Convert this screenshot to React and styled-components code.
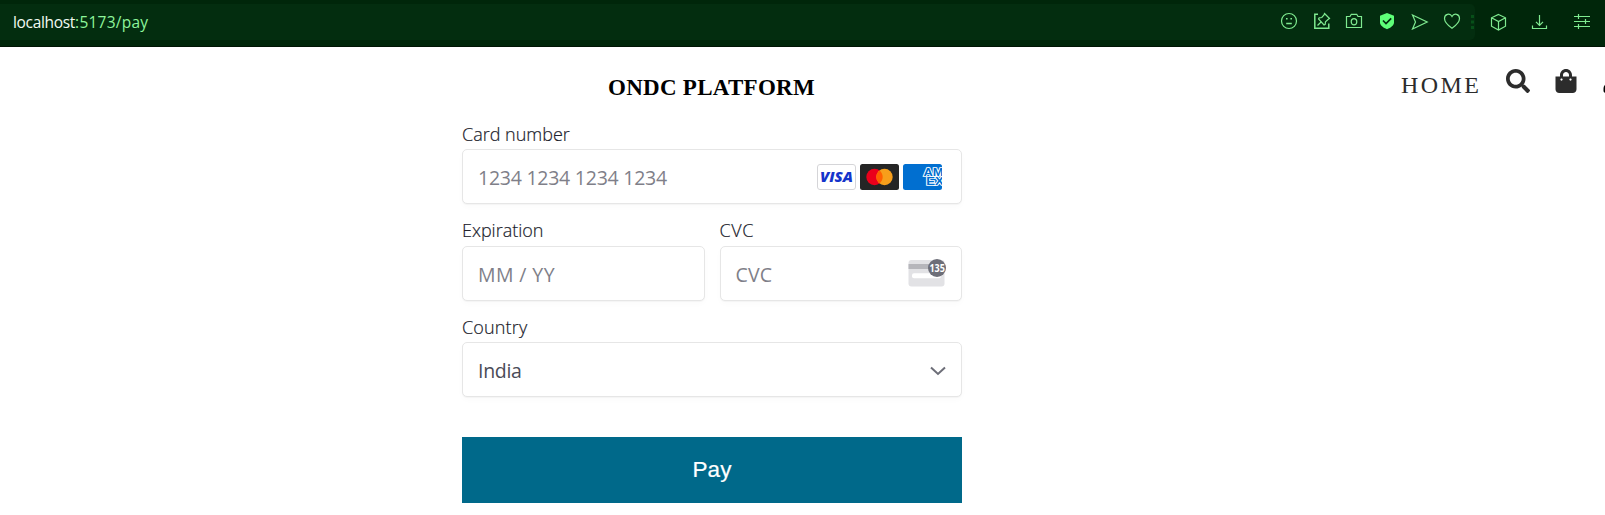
import React from "react";
import styled, { createGlobalStyle } from "styled-components";
import { FaSearch, FaShoppingBag, FaUser } from "react-icons/fa";

const GlobalStyle = createGlobalStyle`
  * { box-sizing: border-box; }
  html, body { margin: 0; padding: 0; background: #fff; overflow: hidden; }
`;

const Page = styled.div`
  width: 1605px;
  height: 515px;
  overflow: hidden;
`;

const BrowserBar = styled.div`
  display: flex;
  height: 47px;
  padding: 4px 0 6px;
  background: #00260a;
  border-bottom: 1px solid #001404;
`;

const AddressBar = styled.div`
  display: flex;
  align-items: center;
  width: 1475px;
  height: 36px;
  padding: 0 0 2px 13px;
  background: #032d0f;
  border-radius: 0 5px 5px 0;
`;

const Url = styled.div`
  flex: 1;
  padding-top: 2px;
  font: 400 15.5px/22px "Open Sans", "Noto Sans", sans-serif;
  letter-spacing: 0.25px;
  color: #8df59a;
`;

const Host = styled.span`
  letter-spacing: -0.32px;
  color: #f3fbf4;
`;

const BarIcon = styled.svg`
  flex: none;
  width: 18px;
  height: 18px;
  margin-left: ${(p) => p.$gap ?? 0}px;
  fill: none;
  stroke: #7fea90;
  stroke-width: 1.2;
`;

const Grip = styled.svg`
  flex: none;
  width: 3px;
  height: 14px;
  margin: 1px 1px 0 10px;
  fill: #075019;
`;

const BarTools = styled.div`
  display: flex;
  align-items: center;
  padding-bottom: 1px;
`;

const SiteHeader = styled.header`
  display: flex;
  height: 75px;
  padding-left: 608px;
`;

const Brand = styled.h1`
  flex: none;
  width: 793px;
  margin: 0;
  padding-top: 27px;
  font: 700 23px/28px "Liberation Serif", serif;
  letter-spacing: 0.28px;
  color: #000;
`;

const Nav = styled.nav`
  display: flex;
  flex: none;
  align-items: flex-start;
  color: #2c2c2c;
`;

const NavLink = styled.span`
  width: 105px;
  padding-top: 24px;
  font: 400 24px/28px "Liberation Serif", serif;
  letter-spacing: 2.4px;
`;

const NavIcon = styled.span`
  display: flex;
  flex: none;
  width: ${(p) => p.$width}px;
  padding-top: 22px;
  font-size: 24px;
  color: ${(p) => p.$color ?? "inherit"};
`;

const Form = styled.form`
  display: flex;
  flex-direction: column;
  width: 500px;
  margin-left: 462px;
`;

const FieldRow = styled.div`
  display: flex;
  gap: 15px;
  margin-bottom: ${(p) => p.$after}px;
`;

const Field = styled.div`
  display: flex;
  flex: 1;
  flex-direction: column;
`;

const Label = styled.label`
  height: ${(p) => p.$height ?? 27}px;
  font: 300 18px/24px "Open Sans", "Noto Sans", sans-serif;
  letter-spacing: ${(p) => p.$spacing ?? 0}px;
  color: #12131c;
  -webkit-text-stroke: 0.2px #30313d;
`;

const InputBox = styled.div`
  display: flex;
  align-items: center;
  justify-content: space-between;
  height: 55px;
  padding: 0 ${(p) => p.$end ?? 16}px 0 15px;
  border: 1px solid #e6e6e6;
  border-radius: 5px;
  background: #fff;
  box-shadow: 0 1px 1px rgba(0, 0, 0, 0.03), 0 3px 6px rgba(0, 0, 0, 0.02);
`;

const Value = styled.span`
  padding-top: 2px;
  font: 400 19.5px/28px "Open Sans", "Noto Sans", sans-serif;
  letter-spacing: ${(p) => p.$spacing ?? 0}px;
  color: ${(p) => (p.$filled ? "#4a4b57" : "#7f7f89")};
`;

const CardBrands = styled.div`
  display: flex;
  gap: 4px;
`;

const CardLogo = styled.svg`
  width: 39px;
  height: 26px;
`;

const CvcArt = styled.svg`
  width: 38px;
  height: 28px;
  margin-top: -1px;
`;

const Chevron = styled.svg`
  width: 16px;
  height: 10px;
  margin-top: 2px;
  fill: none;
  stroke: #6d6e78;
  stroke-width: 2;
`;

const PayButton = styled.button`
  height: 66px;
  padding: 0;
  border: 0;
  background: #00698a;
  color: #fff;
  font: 400 22.5px/28px "Liberation Sans", sans-serif;
  -webkit-text-stroke: 0.2px #fff;
`;

function AddressIcons() {
  return (
    <>
      <BarIcon viewBox="0 0 18 18">
        <circle cx="9" cy="9" r="7.5" />
        <path d="M6 6.7h1.6M10.4 6.7H12M6.2 11.5h5.6" strokeWidth="1.5" />
      </BarIcon>
      <BarIcon viewBox="0 0 18 18" $gap={15}>
        <path d="M5 2.2H1.8v14h14V11.5" strokeWidth="1.5" />
        <path d="M11.5 1.5l5 5-1.5 1-2.5 2.2-.3 2.6-1.2.7L5.5 7l.7-1.2 2.6-.3L11 3z" />
        <path d="M8.3 9.8L4.5 13.5" />
      </BarIcon>
      <BarIcon viewBox="0 0 18 18" $gap={14}>
        <path d="M1.5 4.5H5l1.3-2.2h5.4L13 4.5h3.5v11h-15z" />
        <ellipse cx="9" cy="9.8" rx="2.8" ry="3.1" />
      </BarIcon>
      <BarIcon viewBox="0 0 18 18" $gap={15}>
        <path d="M9 1l7 2.8v6.4c0 3.2-3.2 5.3-7 7-3.8-1.7-7-3.8-7-7V3.8z" fill="#5eff78" stroke="none" />
        <path d="M5 8.5l3 3 5.2-5.2" stroke="#032d0f" strokeWidth="1.7" />
      </BarIcon>
      <BarIcon viewBox="0 0 18 18" $gap={15}>
        <path d="M1.5 3L16.2 10 1.5 17 4.5 10z" />
      </BarIcon>
      <BarIcon viewBox="0 0 18 18" $gap={14}>
        <path d="M9 16.3C4 12.7 1.5 10 1.5 6.5 1.5 2 7 .7 9 4.5c2-3.8 7.5-2.5 7.5 2 0 3.5-2.5 6.2-7.5 9.8z" />
      </BarIcon>
      <Grip viewBox="0 0 3 14">
        <path d="M0 0h3v3H0zM0 5.5h3v3H0zM0 11h3v3H0z" />
      </Grip>
    </>
  );
}

function BrowserTools() {
  return (
    <BarTools>
      <BarIcon viewBox="0 0 18 18" $gap={15}>
        <path d="M8.5 1.5l7 3.3v8.4l-7 3.8-7-3.8V4.8zM1.5 4.8l7 3.7 7-3.7M8.5 8.5V17" />
      </BarIcon>
      <BarIcon viewBox="0 0 18 18" $gap={23}>
        <path d="M8.5 2v10M5 8.8l3.5 3.5L12 8.8M1.5 12.5v3h14v-3" />
      </BarIcon>
      <BarIcon viewBox="0 0 18 18" $gap={24}>
        <path d="M1 3.5h16M1 8.5h16M1 13.5h16M5.5 1v5M12.5 6v5M5.5 11v5" />
      </BarIcon>
    </BarTools>
  );
}

const VisaText = styled.text`
  font: italic 800 13.6px "Open Sans", "Noto Sans", sans-serif;
  fill: #1434cb;
`;

function VisaLogo() {
  return (
    <CardLogo viewBox="0 0 39 26">
      <rect x=".5" y=".5" width="38" height="25" rx="2.5" fill="#fff" stroke="#d5d5d8" />
      <VisaText x="3" y="18.1" textLength="33" lengthAdjust="spacingAndGlyphs">VISA</VisaText>
    </CardLogo>
  );
}

function MastercardLogo() {
  return (
    <CardLogo viewBox="0 0 39 26">
      <rect width="39" height="26" rx="2.5" fill="#252525" />
      <circle cx="14.5" cy="13" r="8.2" fill="#eb001b" />
      <circle cx="24.5" cy="13" r="8.2" fill="#f79e1b" />
      <path d="M19.5 6.5a8.2 8.2 0 0 1 0 13 8.2 8.2 0 0 1 0-13z" fill="#ff5f00" />
    </CardLogo>
  );
}

const AmexText = styled.text`
  font: 700 10px "Liberation Sans", sans-serif;
  fill: #016fd0;
  stroke: #fff;
  stroke-width: 1.6;
  stroke-linejoin: miter;
  paint-order: stroke;
`;

function AmexLogo() {
  return (
    <CardLogo viewBox="0 0 39 26">
      <rect width="39" height="26" rx="2.5" fill="#016fd0" />
      <AmexText x="20.5" y="12" textLength="20" lengthAdjust="spacingAndGlyphs">AM</AmexText>
      <AmexText x="23.2" y="21" textLength="17.5" lengthAdjust="spacingAndGlyphs">EX</AmexText>
    </CardLogo>
  );
}

const CvcCount = styled.text`
  font: 700 10.5px "Open Sans", "Noto Sans", sans-serif;
  fill: #fff;
`;

function CvcIllustration() {
  return (
    <CvcArt viewBox="0 0 38 28">
      <rect x="0.5" y="1" width="36" height="26.5" rx="3" fill="#e2e2e5" />
      <rect x="0.5" y="5" width="36" height="5" fill="#b6b6bb" />
      <rect x="4" y="14.3" width="29" height="5" rx="2" fill="#fff" />
      <circle cx="29" cy="9" r="9" fill="#6d6e78" />
      <CvcCount x="21.4" y="12.8" textLength="15.4" lengthAdjust="spacingAndGlyphs">135</CvcCount>
    </CvcArt>
  );
}

export default function App() {
  return (
    <Page>
      <GlobalStyle />
      <BrowserBar>
        <AddressBar>
          <Url><Host>localhost</Host>:5173/pay</Url>
          <AddressIcons />
        </AddressBar>
        <BrowserTools />
      </BrowserBar>
      <SiteHeader>
        <Brand>ONDC PLATFORM</Brand>
        <Nav>
          <NavLink>HOME</NavLink>
          <NavIcon $width={47.5}><FaSearch /></NavIcon>
          <NavIcon $width={48.5}><FaShoppingBag /></NavIcon>
          <NavIcon $width={24} $color="#000"><FaUser /></NavIcon>
        </Nav>
      </SiteHeader>
      <Form>
        <FieldRow $after={14}>
          <Field>
            <Label>Card number</Label>
            <InputBox $end={19}>
              <Value $spacing={-0.25}>1234 1234 1234 1234</Value>
              <CardBrands>
                <VisaLogo />
                <MastercardLogo />
                <AmexLogo />
              </CardBrands>
            </InputBox>
          </Field>
        </FieldRow>
        <FieldRow $after={14}>
          <Field>
            <Label $height={28}>Expiration</Label>
            <InputBox><Value $spacing={0.4}>MM / YY</Value></InputBox>
          </Field>
          <Field>
            <Label $height={28} $spacing={0.6}>CVC</Label>
            <InputBox $end={15}>
              <Value $spacing={0.2}>CVC</Value>
              <CvcIllustration />
            </InputBox>
          </Field>
        </FieldRow>
        <FieldRow $after={40}>
          <Field>
            <Label $spacing={0.15}>Country</Label>
            <InputBox $end={15}>
              <Value $filled $spacing={-0.3}>India</Value>
              <Chevron viewBox="0 0 16 10"><path d="M1 1.5l7 6.5 7-6.5" /></Chevron>
            </InputBox>
          </Field>
        </FieldRow>
        <PayButton type="button">Pay</PayButton>
      </Form>
    </Page>
  );
}
